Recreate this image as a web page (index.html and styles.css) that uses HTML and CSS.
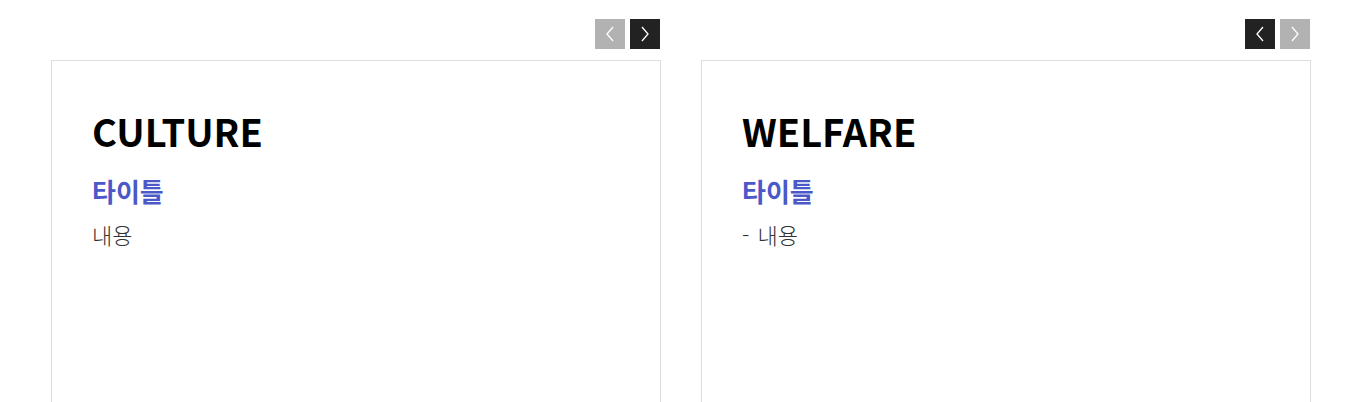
FILE: index.html
```html
<!DOCTYPE html>
<html lang="ko">
<head>
<meta charset="utf-8">
<link rel="stylesheet" href="styles.css">
</head>
<body>
<div class="wrap">
  <section class="col">
    <div class="nav">
      <button class="btn btn-off" aria-label="prev"><svg viewBox="0 0 30 30" width="30" height="30"><path d="M18 8 L12 15 L18 22" fill="none" stroke="#fff" stroke-width="1.3"/></svg></button>
      <button class="btn btn-on" aria-label="next"><svg viewBox="0 0 30 30" width="30" height="30"><path d="M12 8 L18 15 L12 22" fill="none" stroke="#fff" stroke-width="1.3"/></svg></button>
    </div>
    <div class="card">
      <h2 class="card-title">CULTURE</h2>
      <h3 class="card-sub">타이틀</h3>
      <p class="card-text">내용</p>
    </div>
  </section>
  <section class="col">
    <div class="nav">
      <button class="btn btn-on" aria-label="prev"><svg viewBox="0 0 30 30" width="30" height="30"><path d="M18 8 L12 15 L18 22" fill="none" stroke="#fff" stroke-width="1.3"/></svg></button>
      <button class="btn btn-off" aria-label="next"><svg viewBox="0 0 30 30" width="30" height="30"><path d="M12 8 L18 15 L12 22" fill="none" stroke="#fff" stroke-width="1.3"/></svg></button>
    </div>
    <div class="card">
      <h2 class="card-title">WELFARE</h2>
      <h3 class="card-sub">타이틀</h3>
      <p class="card-text">- 내용</p>
    </div>
  </section>
</div>
</body>
</html>
```
FILE: styles.css
```css
* { box-sizing: border-box; }
html, body { margin: 0; padding: 0; background: #fff; }
body { font-family: "Noto Sans CJK KR", "Noto Sans", sans-serif; overflow: hidden; }
.wrap {
  width: 1260px;
  margin: 0 auto;
  padding-top: 19px;
  display: grid;
  grid-template-columns: 610px 610px;
  column-gap: 40px;
}
.nav {
  display: flex;
  justify-content: flex-end;
  gap: 5px;
  padding-right: 1px;
  margin-bottom: 11px;
}
.btn {
  width: 30px;
  height: 30px;
  padding: 0;
  border: 0;
  display: block;
}
.btn svg { display: block; }
.btn-on { background: #222; }
.btn-off { background: #b2b2b2; }
.card {
  border: 1px solid #ddd;
  height: 400px;
  padding: 40px 40px;
}
.card-title {
  margin: 0;
  font-size: 38px;
  font-weight: 700;
  line-height: 60px;
  color: #000;
}
.card-sub {
  margin: 12px 0 0;
  font-size: 26px;
  font-weight: 700;
  line-height: 36px;
  color: #4a58c8;
}
.card-text {
  margin: 10px 0 0;
  font-size: 22px;
  font-weight: 300;
  line-height: 30px;
  word-spacing: 2px;
  color: #333;
}
```
